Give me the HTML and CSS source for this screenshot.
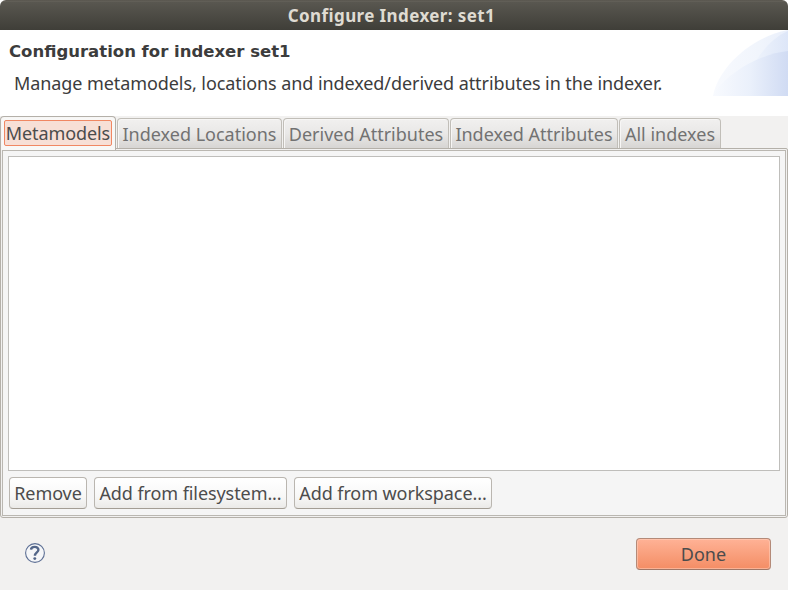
FILE: index.html
```html
<!DOCTYPE html>
<html lang="en">
<head>
<meta charset="utf-8">
<title>Configure Indexer: set1</title>
<link rel="stylesheet" href="styles.css">
</head>
<body>
<div class="window">
  <div class="titlebar"><span>Configure Indexer: set1</span></div>
  <header class="header">
    <div class="header-text">
      <h1>Configuration for indexer set1</h1>
      <p><span>Manage metamodels, locations and indexed/derived attributes in the indexer.</span></p>
    </div>
    <svg class="banner" width="75" height="66" viewBox="0 0 75 66">
      <defs>
        <linearGradient id="back" x1="0" x2="1"><stop offset="0" stop-color="#f8fafe"/><stop offset=".6" stop-color="#f1f5fc"/><stop offset="1" stop-color="#e9effb"/></linearGradient>
        <linearGradient id="mid" gradientUnits="userSpaceOnUse" x1="40" x2="75" y1="0" y2="0"><stop offset="0" stop-color="#eff4fc"/><stop offset="1" stop-color="#dde6f8"/></linearGradient>
        <linearGradient id="front" x1="0" x2="1"><stop offset="0" stop-color="#f8fafe"/><stop offset=".5" stop-color="#eaf0fb"/><stop offset="1" stop-color="#d0dbf3"/></linearGradient>
      </defs>
      <path d="M0 66C5 38 38 7 75 0V66Z" fill="url(#back)"/>
      <path d="M28 66C35 38 53 10 75 1V66Z" fill="url(#mid)"/>
      <path d="M0 66C10 46 45 24 75 21V66Z" fill="url(#front)"/>
    </svg>
  </header>
  <nav class="tabs">
    <div class="tab tab-selected"><span class="tab-focus">Metamodels</span></div>
    <div class="tab tab-2"><span>Indexed Locations</span></div>
    <div class="tab tab-3"><span>Derived Attributes</span></div>
    <div class="tab tab-4"><span>Indexed Attributes</span></div>
    <div class="tab tab-5"><span>All indexes</span></div>
  </nav>
  <section class="panel">
    <div class="panel-inner">
      <div class="list"></div>
      <div class="actions">
        <button class="btn btn-remove"><span>Remove</span></button>
        <button class="btn btn-filesystem"><span>Add from filesystem...</span></button>
        <button class="btn btn-workspace"><span>Add from workspace...</span></button>
      </div>
    </div>
  </section>
  <footer class="footer">
    <svg class="help" width="20" height="20" viewBox="0 0 20 20">
      <circle cx="10" cy="10" r="9.4" fill="#f5f6f8" stroke="#5d6f94" stroke-width="1.1"/>
      <path d="M6 6.6C6.2 3 13.6 2.9 13.4 7C13.2 9.4 9.9 9.4 9.9 12.8" fill="none" stroke="#536689" stroke-width="2.4"/>
      <circle cx="9.8" cy="15.6" r="1.45" fill="#536689"/>
    </svg>
    <button class="btn btn-done"><span>Done</span></button>
  </footer>
</div>
</body>
</html>
```
FILE: styles.css
```css
* { box-sizing: border-box; }
body {
  margin: 0;
  background: #fff;
  color: #3c3c3c;
  font-family: "Noto Sans", "Open Sans", sans-serif;
  font-size: 18px;
}
span { white-space: nowrap; }
.window {
  width: 788px;
  height: 590px;
  display: flex;
  flex-direction: column;
  background: linear-gradient(#fff 30px, #f2f1f0 30px);
}
.titlebar {
  height: 30px;
  flex: none;
  display: flex;
  align-items: center;
  justify-content: center;
  padding: 1px 5px 0 0;
  border-radius: 6px 6px 0 0;
  background: linear-gradient(#4e4b44 0, #69665e 1px, #595750 2px, #3f3e38 30px);
  color: #dfdbd2;
  font-weight: bold;
  font-size: 17px;
  letter-spacing: 0.4px;
}
.header {
  height: 86px;
  flex: none;
  display: flex;
  justify-content: space-between;
  background: #fff;
}
.header-text { padding: 12px 0 0 9px; }
h1 {
  margin: 0;
  font: bold 16.5px/20px "DejaVu Sans", sans-serif;
  white-space: nowrap;
}
p {
  margin: 8px 0 0 5px;
  line-height: 26px;
  letter-spacing: -0.08px;
}
.banner { flex: none; }
.tabs {
  height: 32px;
  flex: none;
  display: flex;
  align-items: flex-end;
  gap: 1px;
}
.tab {
  height: 30px;
  display: flex;
  justify-content: center;
  align-items: center;
  border: 1px solid #c1beb8;
  border-bottom: 0;
  border-radius: 4px 4px 0 0;
  background: linear-gradient(#f1f0ef, #e9e8e7 50%, #d7d5d3);
  box-shadow: inset 1px 1px 0 #f7f6f5;
  color: #727272;
}
.tab-selected {
  width: 116px;
  height: 34px;
  margin-bottom: -2px;
  padding: 3px;
  align-items: flex-start;
  border-color: #b4b0a9;
  background: #f8f8f7;
  color: #4c4c4c;
  letter-spacing: -0.1px;
  z-index: 1;
}
.tab-focus {
  width: 108px;
  height: 26px;
  display: flex;
  align-items: center;
  justify-content: center;
  border: 1px solid #f08763;
  border-radius: 2px;
  background: #f7dfd6;
}
.tab-2 { width: 165px; }
.tab-3 { width: 166px; }
.tab-4 { width: 168px; }
.tab-5 { width: 102px; }
.panel {
  height: 370px;
  flex: none;
  padding: 1px;
  border: 1px solid #b4b0a9;
  border-radius: 0 2px 3px 3px;
  background: #f2f1f0;
}
.panel-inner {
  height: 366px;
  padding: 5px;
  border: 1px solid #bab7b1;
  background: #f5f5f5;
}
.list {
  height: 315px;
  width: 772px;
  border: 1px solid #bfbebb;
  background: #fff;
}
.actions {
  display: flex;
  gap: 7px;
  padding: 6px 0 0 1px;
}
.btn {
  height: 32px;
  padding: 0;
  display: flex;
  align-items: center;
  justify-content: center;
  border: 1px solid #bab6b0;
  border-bottom-color: #a39d94;
  border-radius: 4px;
  background: linear-gradient(#fff, #f8f8f7 60%, #ebeae8);
  color: #4c4c4c;
  font: inherit;
  letter-spacing: -0.08px;
}
.btn-remove { width: 78px; }
.btn-filesystem { width: 193px; }
.btn-workspace { width: 198px; }
.footer {
  flex: 1;
  display: flex;
  justify-content: space-between;
  align-items: flex-start;
  padding: 20px 17px 0 25px;
}
.help { margin-top: 5px; }
.btn-done {
  width: 135px;
  border-color: #b48a78;
  border-bottom-color: #9f7767;
  background: linear-gradient(#ffb296, #f89c78 60%, #f48d65);
  box-shadow: inset 0 0 0 1px rgba(255, 210, 190, .55);
  letter-spacing: 0;
}
```
